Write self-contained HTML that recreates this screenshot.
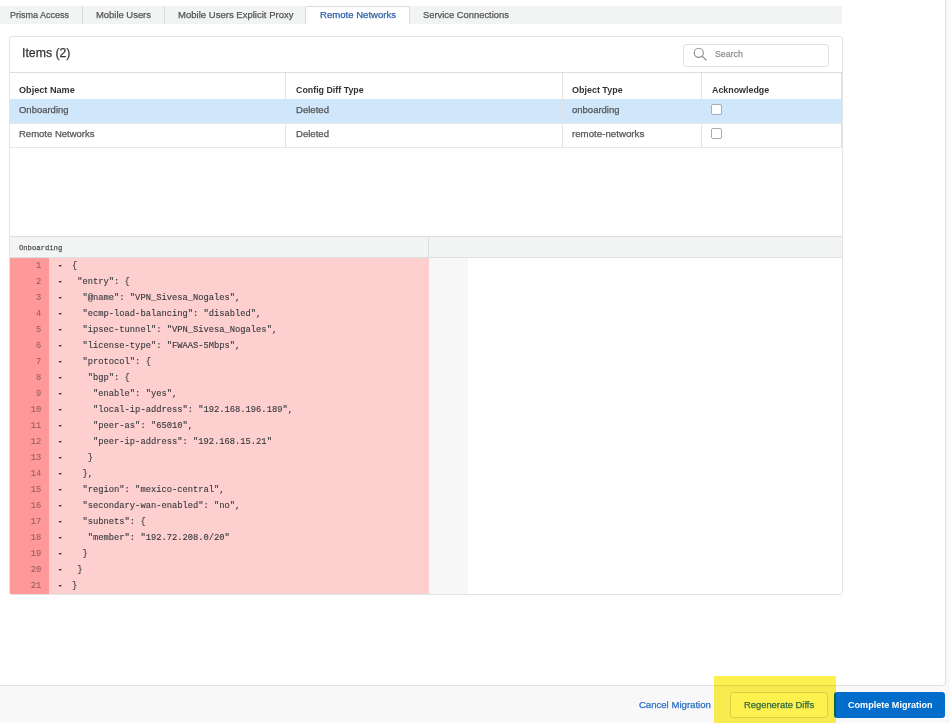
<!DOCTYPE html>
<html>
<head>
<meta charset="utf-8">
<style>
*{box-sizing:border-box;margin:0;padding:0}
html,body{width:950px;height:723px;overflow:hidden;background:#f8f8f8}
body{font-family:"Liberation Sans",sans-serif;color:#333;position:relative}
.abs{position:absolute}
.t{position:absolute;white-space:nowrap;height:16px;line-height:16px;transform-origin:0 50%;-webkit-text-stroke:0.25px}
/* tabs */
#tabbar{left:0;top:6px;width:842px;height:18px;background:#f2f4f4}
.tab{position:absolute;top:0;height:18px;font-size:9.6px;line-height:18px;color:#555;white-space:nowrap;transform-origin:0 50%;-webkit-text-stroke:0.25px}
.sep{position:absolute;top:0;width:1px;height:18px;background:#dadcdc}
#activetab{left:305px;top:6px;width:105px;height:18px;background:#fff;border:1px solid #dadcdc;border-bottom:none;border-radius:2px 2px 0 0}
/* panel */
#panel{left:8.7px;top:36.2px;width:834.2px;height:558.4px;border:1.3px solid #e2e4e4;border-radius:3px;background:#fff}
.hl{position:absolute;height:1px;background:#dcdedf}
.vl{position:absolute;width:1px;background:#e3e5e5}
#search{left:682.5px;top:44px;width:146.6px;height:23px;border:1.4px solid #e0e2e2;border-radius:3px;background:#fff}
.cb{position:absolute;width:11px;height:10.8px;border:1px solid #a6acb4;border-radius:2px;background:#fff}
/* diff */
#dhead{left:10px;top:236px;width:832px;height:22px;background:#f3f4f4;border-top:1px solid #dcdedf;border-bottom:1px solid #dcdedf}
#lgut{left:9.5px;top:258px;width:39.7px;height:335.7px;background:#ff9999}
#lcode{left:49.2px;top:258px;width:379.5px;height:335.7px;background:#fdcfcf}
#rgut{left:429px;top:258px;width:39px;height:335.7px;background:#f7f7f7}
.ln{position:absolute;left:10.6px;width:30.7px;height:16px;line-height:16px;text-align:right;font-family:"Liberation Mono",monospace;font-size:8.78px;color:#9a5e62;-webkit-text-stroke:0.1px}
.cl{position:absolute;left:57.5px;height:16px;line-height:16px;font-family:"Liberation Mono",monospace;font-size:8.78px;color:#33373c;white-space:pre;-webkit-text-stroke:0.1px}
/* footer */
#page{left:-5px;top:-5px;width:951px;height:691px;border:1.5px solid #e0e2e2;border-radius:0 0 4px 0;background:#fff}
#yellow{left:714px;top:676px;width:122px;height:47px;background:#fdf150}
#regen{left:730.3px;top:692px;width:97.5px;height:25.7px;border:1px solid #dcdcdc;border-radius:3px;background:#fff}
#complete{left:834.2px;top:692.1px;width:110.8px;height:25.8px;border-radius:3px;background:#036dcc}
</style>
</head>
<body>
<div class="abs" id="page"></div>
<div class="abs" id="tabbar">
  <div class="tab" style="left:9.6px;font-size:9.6px;transform:scaleX(0.94)">Prisma Access</div>
  <div class="sep" style="left:82px"></div>
  <div class="tab" style="left:95.8px;font-size:9.6px;transform:scaleX(0.982)">Mobile Users</div>
  <div class="sep" style="left:164px"></div>
  <div class="tab" style="left:177.5px;font-size:9.6px;transform:scaleX(0.994)">Mobile Users Explicit Proxy</div>
  <div class="tab" style="left:422.7px;font-size:9.6px;transform:scaleX(0.976)">Service Connections</div>
</div>
<div class="abs" id="activetab"></div>
<div class="tab" style="left:319.9px;top:6px;font-size:9.6px;transform:scaleX(0.997);color:#2f62a8">Remote Networks</div>

<div class="abs" id="panel"></div>
<div class="t" style="left:21.7px;top:44.5px;font-size:13px;transform:scaleX(0.945);color:#333">Items (2)</div>
<div class="abs" id="search"></div>
<svg class="abs" style="left:692px;top:46.2px" width="16" height="16" viewBox="0 0 16 16"><circle cx="6.8" cy="6.8" r="4.6" fill="none" stroke="#8a8f93" stroke-width="1.1"/><line x1="10.2" y1="10.2" x2="14" y2="14" stroke="#8a8f93" stroke-width="1.2" stroke-linecap="round"/></svg>
<div class="t" style="left:715.2px;top:45.5px;font-size:9.6px;transform:scaleX(0.914);color:#8a8f93">Search</div>

<div class="hl" style="left:9.6px;top:72px;width:832px"></div>
<div class="hl" style="left:9.6px;top:98.5px;width:832px;background:#d9dcdd"></div>
<div class="abs" style="left:9.6px;top:99.4px;width:831.8px;height:23.9px;background:#cfe6fb"></div>
<div class="hl" style="left:9.6px;top:123px;width:832px;background:#e6e8e8"></div>
<div class="hl" style="left:9.6px;top:147px;width:832px;background:#e6e8e8"></div>
<div class="vl" style="left:285px;top:73px;height:75px"></div>
<div class="vl" style="left:562px;top:73px;height:75px"></div>
<div class="vl" style="left:701px;top:73px;height:75px"></div>
<div class="vl" style="left:841px;top:73px;height:75px;background:#dfe1e1"></div>

<div class="t" style="left:19.2px;top:81.8px;font-size:9.6px;transform:scaleX(0.951);font-weight:bold;color:#333;-webkit-text-stroke:0">Object Name</div>
<div class="t" style="left:295.7px;top:81.8px;font-size:9.6px;transform:scaleX(0.922);font-weight:bold;color:#333;-webkit-text-stroke:0">Config Diff Type</div>
<div class="t" style="left:572.3px;top:81.8px;font-size:9.6px;transform:scaleX(0.934);font-weight:bold;color:#333;-webkit-text-stroke:0">Object Type</div>
<div class="t" style="left:712.3px;top:81.8px;font-size:9.6px;transform:scaleX(0.924);font-weight:bold;color:#333;-webkit-text-stroke:0">Acknowledge</div>

<div class="t" style="left:19px;top:102px;font-size:9.6px;transform:scaleX(0.988);color:#555">Onboarding</div>
<div class="t" style="left:295.5px;top:102px;font-size:9.6px;transform:scaleX(0.997);color:#555">Deleted</div>
<div class="t" style="left:572.3px;top:102px;font-size:9.6px;transform:scaleX(0.99);color:#555">onboarding</div>
<div class="cb" style="left:711.2px;top:104px"></div>

<div class="t" style="left:19px;top:125.9px;font-size:9.6px;transform:scaleX(0.99);color:#555">Remote Networks</div>
<div class="t" style="left:295.5px;top:125.9px;font-size:9.6px;transform:scaleX(0.997);color:#555">Deleted</div>
<div class="t" style="left:572.3px;top:125.9px;font-size:9.6px;transform:scaleX(1.011);color:#555">remote-networks</div>
<div class="cb" style="left:711.2px;top:128px"></div>

<div class="abs" id="dhead"></div>
<div class="vl" style="left:428px;top:237px;height:21px;background:#dcdedf"></div>
<div class="t" style="left:18.9px;top:239.7px;font-family:'Liberation Mono',monospace;font-size:7.22px;color:#555">Onboarding</div>
<div class="abs" id="lgut"></div>
<div class="abs" id="lcode"></div>
<div class="abs" id="rgut"></div>
<div id="lines">
<div class="ln" style="top:258px">1</div><div class="cl" style="top:258px;font-weight:bold">-</div><div class="cl" style="top:258px;left:72px">{</div>
<div class="ln" style="top:274px">2</div><div class="cl" style="top:274px;font-weight:bold">-</div><div class="cl" style="top:274px;left:72px"> "entry": {</div>
<div class="ln" style="top:290px">3</div><div class="cl" style="top:290px;font-weight:bold">-</div><div class="cl" style="top:290px;left:72px">  "@name": "VPN_Sivesa_Nogales",</div>
<div class="ln" style="top:306px">4</div><div class="cl" style="top:306px;font-weight:bold">-</div><div class="cl" style="top:306px;left:72px">  "ecmp-load-balancing": "disabled",</div>
<div class="ln" style="top:322px">5</div><div class="cl" style="top:322px;font-weight:bold">-</div><div class="cl" style="top:322px;left:72px">  "ipsec-tunnel": "VPN_Sivesa_Nogales",</div>
<div class="ln" style="top:338px">6</div><div class="cl" style="top:338px;font-weight:bold">-</div><div class="cl" style="top:338px;left:72px">  "license-type": "FWAAS-5Mbps",</div>
<div class="ln" style="top:354px">7</div><div class="cl" style="top:354px;font-weight:bold">-</div><div class="cl" style="top:354px;left:72px">  "protocol": {</div>
<div class="ln" style="top:370px">8</div><div class="cl" style="top:370px;font-weight:bold">-</div><div class="cl" style="top:370px;left:72px">   "bgp": {</div>
<div class="ln" style="top:386px">9</div><div class="cl" style="top:386px;font-weight:bold">-</div><div class="cl" style="top:386px;left:72px">    "enable": "yes",</div>
<div class="ln" style="top:402px">10</div><div class="cl" style="top:402px;font-weight:bold">-</div><div class="cl" style="top:402px;left:72px">    "local-ip-address": "192.168.196.189",</div>
<div class="ln" style="top:418px">11</div><div class="cl" style="top:418px;font-weight:bold">-</div><div class="cl" style="top:418px;left:72px">    "peer-as": "65010",</div>
<div class="ln" style="top:434px">12</div><div class="cl" style="top:434px;font-weight:bold">-</div><div class="cl" style="top:434px;left:72px">    "peer-ip-address": "192.168.15.21"</div>
<div class="ln" style="top:450px">13</div><div class="cl" style="top:450px;font-weight:bold">-</div><div class="cl" style="top:450px;left:72px">   }</div>
<div class="ln" style="top:466px">14</div><div class="cl" style="top:466px;font-weight:bold">-</div><div class="cl" style="top:466px;left:72px">  },</div>
<div class="ln" style="top:482px">15</div><div class="cl" style="top:482px;font-weight:bold">-</div><div class="cl" style="top:482px;left:72px">  "region": "mexico-central",</div>
<div class="ln" style="top:498px">16</div><div class="cl" style="top:498px;font-weight:bold">-</div><div class="cl" style="top:498px;left:72px">  "secondary-wan-enabled": "no",</div>
<div class="ln" style="top:514px">17</div><div class="cl" style="top:514px;font-weight:bold">-</div><div class="cl" style="top:514px;left:72px">  "subnets": {</div>
<div class="ln" style="top:530px">18</div><div class="cl" style="top:530px;font-weight:bold">-</div><div class="cl" style="top:530px;left:72px">   "member": "192.72.208.0/20"</div>
<div class="ln" style="top:546px">19</div><div class="cl" style="top:546px;font-weight:bold">-</div><div class="cl" style="top:546px;left:72px">  }</div>
<div class="ln" style="top:562px">20</div><div class="cl" style="top:562px;font-weight:bold">-</div><div class="cl" style="top:562px;left:72px"> }</div>
<div class="ln" style="top:578px">21</div><div class="cl" style="top:578px;font-weight:bold">-</div><div class="cl" style="top:578px;left:72px">}</div>
</div><!--endlines-->

<div class="t" style="left:638.9px;top:697px;font-size:9.6px;transform:scaleX(1.0);color:#2f6fc4">Cancel Migration</div>
<div class="abs" id="regen"></div>
<div class="t" style="left:744.3px;top:697px;font-size:9.6px;transform:scaleX(0.976);color:#2f6fc4">Regenerate Diffs</div>
<div class="abs" id="complete"></div>
<div class="t" style="left:847.6px;top:697px;font-size:9.6px;transform:scaleX(0.945);font-weight:bold;color:#fff;-webkit-text-stroke:0">Complete Migration</div>
<div class="abs" id="yellow" style="mix-blend-mode:multiply"></div>
</body>
</html>
